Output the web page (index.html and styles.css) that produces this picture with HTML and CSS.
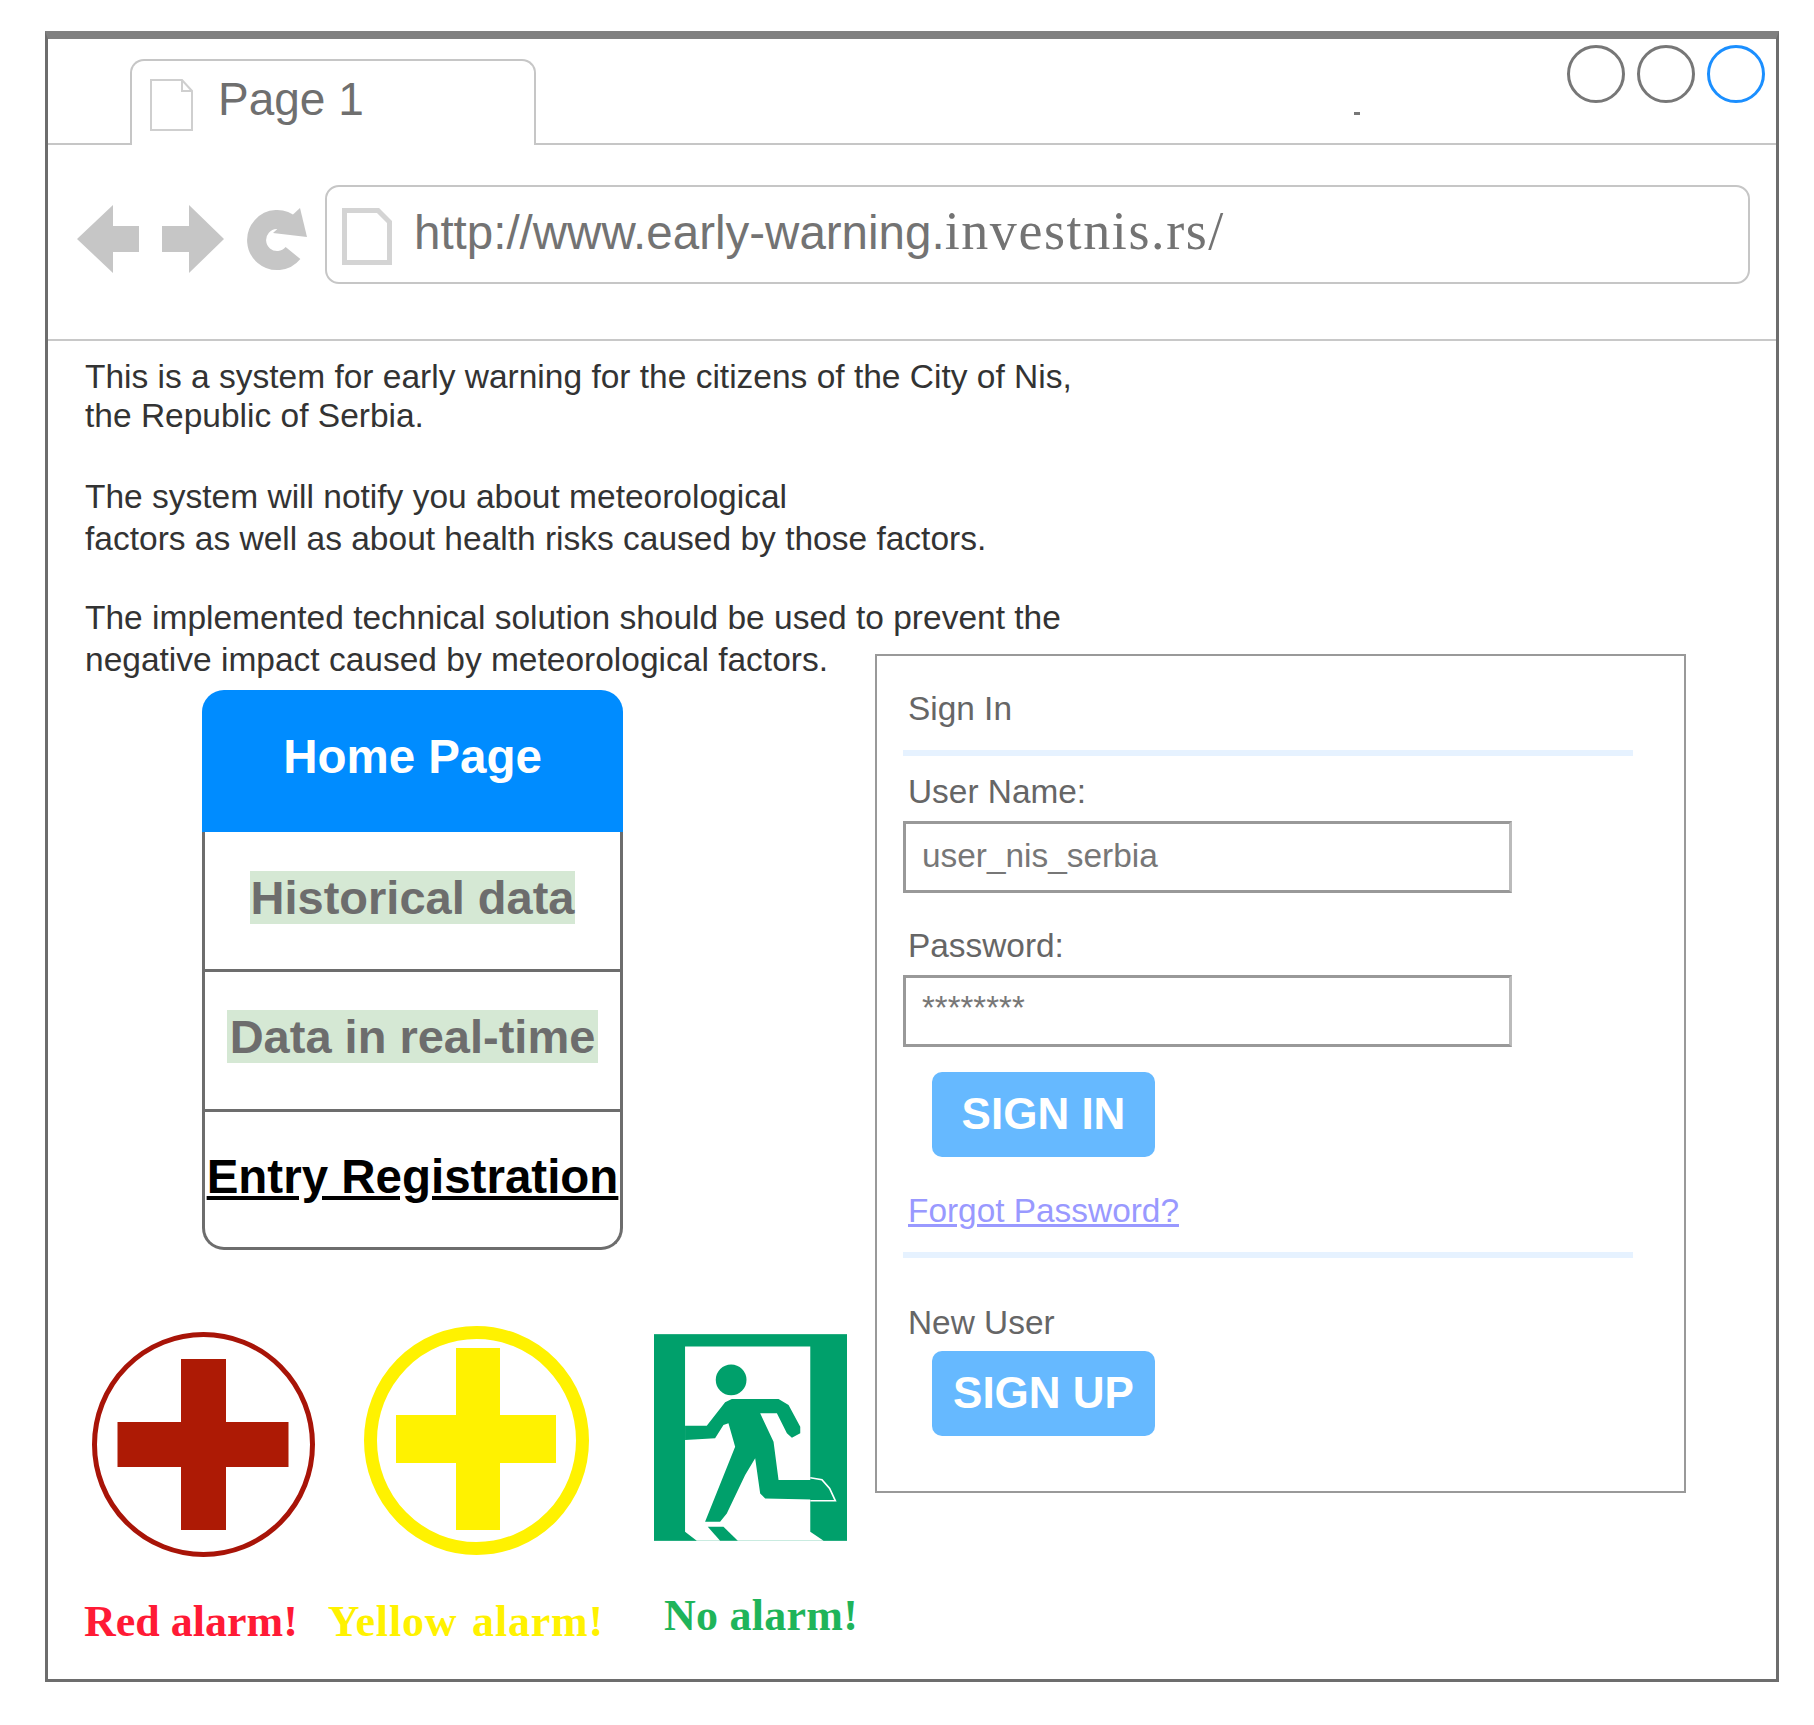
FILE: index.html
```html
<!DOCTYPE html>
<html>
<head>
<title>Early warning</title>
<link rel="stylesheet" href="styles.css">
</head>
<body>
<div class="window">
  <div class="tabbar">
    <div class="tab">
      <svg class="tab-doc" viewBox="0 0 43 52"><path d="M1 1H32L42 12V51H1Z M32 1V12H42" fill="none" stroke="#cfcfcf" stroke-width="2"/></svg>
      <span class="tab-title">Page 1</span>
    </div>
    <div class="dot"></div>
    <div class="win-btns">
      <div class="win-btn"></div>
      <div class="win-btn"></div>
      <div class="win-btn active"></div>
    </div>
  </div>

  <div class="urlbar">
    <svg class="nav-icons" viewBox="0 0 230 68">
      <path d="M0 34L36 0V21H62V47H36V68Z" fill="#c6c6c6"/>
      <path d="M85 21H112V0L147 34L112 68V47H85Z" fill="#c6c6c6"/>
      <path d="M214 20A20.500 20.500 0 1 0 216 48" fill="none" stroke="#c6c6c6" stroke-width="19"/>
      <path d="M223 3L230 32L196 28Z" fill="#c6c6c6"/>
    </svg>
    <div class="urlbox">
      <svg class="url-doc" viewBox="0 0 50 57"><path d="M2.5 2.5H36L47.5 14V54.500H2.500Z" fill="none" stroke="#d4d4d4" stroke-width="5"/></svg>
      <div class="url">http://www.early-warning.<span class="url-end">investnis.rs/</span></div>
    </div>
  </div>

  <div class="main">
    <div class="left">
      <div class="intro">
        <p class="p1">This is a system for early warning for the citizens of the City of Nis,<br>the Republic of Serbia.</p>
        <p class="p2">The system will notify you about meteorological<br>factors as well as about health risks caused by those factors.</p>
        <p class="p3">The implemented technical solution should be used to prevent the<br>negative impact caused by meteorological factors.</p>
      </div>

      <div class="menu">
        <div class="menu-head">Home Page</div>
        <div class="menu-list">
          <div class="menu-row"><span class="mark">Historical data</span></div>
          <div class="menu-row"><span class="mark">Data in real-time</span></div>
          <div class="menu-row last"><a class="entry" href="#">Entry Registration</a></div>
        </div>
      </div>

      <div class="signs">
        <svg class="sign-red" viewBox="0 0 223 225">
          <ellipse cx="111.500" cy="112.500" rx="109" ry="110" fill="none" stroke="#a81408" stroke-width="5"/>
          <path d="M89 27H134V90H196.500V135H134V198H89V135H25.500V90H89Z" fill="#ad1a05"/>
        </svg>
        <svg class="sign-yellow" viewBox="0 0 225 229">
          <ellipse cx="112.500" cy="114.500" rx="106" ry="108" fill="none" stroke="#fff200" stroke-width="13"/>
          <path d="M92 22H136V89H192V137H136V204H92V137H32V89H92Z" fill="#fff200"/>
        </svg>
        <svg class="sign-exit" viewBox="27 28 578 619">
          <rect x="27" y="28" width="578" height="619" fill="#00a06b"/>
          <path d="M120 65H495V620L535 647H155L120 620Z" fill="#fff"/>
          <circle cx="258" cy="165" r="46" fill="#00a06b"/>
          <path d="M120 302H185L240 232L260 222H400L430 240L465 305V325L440 338L425 325L395 265H345L385 350L400 465H505L530 480L570 525L360 520L345 505L330 400L300 450L245 565L225 590H180L270 365L250 295L235 300L210 340L120 345Z" fill="#00a06b"/>
          <path d="M188 605H235L278 647H225Z" fill="#00a06b"/>
          <path d="M495 458L530 464L553 490L570 527H495" fill="none" stroke="#fff" stroke-width="5"/>
        </svg>
      </div>
      <div class="labels">
        <span class="label red">Red alarm!</span>
        <span class="label yellow">Yellow alarm!</span>
        <span class="label green">No alarm!</span>
      </div>
    </div>

    <div class="panel">
      <div class="text">Sign In</div>
      <div class="rule first"></div>
      <div class="text user-label">User Name:</div>
      <div class="field">user_nis_serbia</div>
      <div class="text pass-label">Password:</div>
      <div class="field pass">********</div>
      <div class="btn signin">SIGN IN</div>
      <a class="text forgot" href="#">Forgot Password?</a>
      <div class="rule second"></div>
      <div class="text new-user">New User</div>
      <div class="btn signup">SIGN UP</div>
    </div>
  </div>
</div>
</body>
</html>
```

FILE: styles.css
```css
body{
margin:0;
padding:31px 0 0 45px;
background:#fff;
font-family:"Liberation Sans",Arial,sans-serif;}
.window{
width:1734px;
height:1651px;
box-sizing:border-box;
border:3px solid #6d6d6d;
border-top:8px solid #808080;}

.tabbar{
position:relative;
display:flex;
height:106px;
box-sizing:border-box;
border-bottom:2px solid #c6c6c6;}
.tab{
display:flex;
width:406px;
height:86px;
box-sizing:border-box;
margin:20px 0 -2px 82px;
padding:18px 0 0 18px;
border:2px solid #c6c6c6;
border-bottom:none;
border-radius:14px 14px 0 0;
background:#fff;
color:#6f6f6f;
font-size:46px;
line-height:40px;}
.tab-doc{width:43px;height:52px;margin-right:25px;}
.dot{
position:absolute;
left:1306px;
top:73px;
width:6px;
height:3px;
background:#777;}
.win-btns{
display:flex;
gap:12px;
margin:6px 11px 0 auto;}
.win-btn{
width:58px;
height:58px;
box-sizing:border-box;
border:3px solid #777;
border-radius:50%;}
.win-btn.active{border-color:#1b8fff;}

.urlbar{
display:flex;
height:196px;
box-sizing:border-box;
padding:40px 0 0 29px;
border-bottom:2px solid #c8c8c8;}
.nav-icons{width:230px;height:68px;margin:20px 18px 0 0;}
.urlbox{
display:flex;
width:1425px;
height:99px;
box-sizing:border-box;
padding:21px 0 0 15px;
border:2px solid #c6c6c6;
border-radius:14px;}
.url-doc{width:50px;height:57px;margin-right:22px;}
.url{
margin-top:-3px;
font-size:47.500px;
line-height:52px;
color:#737373;
white-space:nowrap;}
.url-end{
font-family:"Liberation Serif",serif;
font-size:54px;
letter-spacing:1.600px;}

.main{display:flex;}
.left{width:827px;flex:none;}

.intro{
padding:16px 0 0 37px;
font-size:33.500px;
color:#333;
white-space:nowrap;}
.intro p{margin:0;line-height:42px;}
.intro .p1{line-height:39px;}
.intro .p2{margin-top:41px;}
.intro .p3{margin-top:37px;}

.menu{
width:421px;
margin:9px 0 0 154px;
font-size:47px;
font-weight:bold;
text-align:center;}
.menu-head{
height:142px;
box-sizing:border-box;
padding-top:40px;
font-size:47.500px;
line-height:54px;
border-radius:22px 22px 0 0;
background:#008cff;
color:#fff;}
.menu-list{
height:418px;
box-sizing:border-box;
border:3px solid #6d6d6d;
border-top:none;
border-radius:0 0 22px 22px;}
.menu-row{
height:140px;
box-sizing:border-box;
padding-top:38px;
line-height:53px;
border-bottom:3px solid #6d6d6d;
color:#6d6d6d;}
.menu-row:first-child{padding-top:39px;}
.menu-row.last{border-bottom:none;}
.mark{
display:inline-block;
padding:0 3px;
background:#d5e8d4;}
.menu-row:first-child .mark{padding:0 1px;}
.entry{color:#000;font-size:47.500px;white-space:nowrap;}

.signs{
display:flex;
align-items:flex-start;
margin:76px 0 0 44px;}
.sign-red{width:223px;height:225px;margin-top:6px;}
.sign-yellow{width:225px;height:229px;margin-left:49px;}
.sign-exit{width:193px;height:207px;margin:8px 0 0 65px;}

.labels{
display:flex;
align-items:flex-start;
margin-top:40px;
padding-left:37px;
font-family:"Liberation Serif",serif;
font-size:44px;
font-weight:bold;
line-height:50px;
white-space:nowrap;}
.red{color:#ff1a35;margin-left:-1px;}
.yellow{color:#fff200;margin-left:30px;letter-spacing:.8px;word-spacing:3px;}
.green{color:#1fb45a;margin:-6px 0 0 60px;letter-spacing:.25px;}

.panel{
width:811px;
height:839px;
flex:none;
box-sizing:border-box;
margin-top:313px;
padding:34px 0 0 26px;
border:2px solid #999;}
.text{
display:block;
margin-left:5px;
font-size:33.400px;
line-height:38px;
color:#666;}
.rule{
width:730px;
height:6px;
background:#e6f2ff;}
.rule.first{margin-top:22px;}
.user-label{margin-top:17px;}
.field{
width:609px;
height:72px;
box-sizing:border-box;
margin-top:10px;
padding:13px 0 0 16px;
border:3px solid #999;
border-right-color:#bbb;
font-size:33.400px;
line-height:38px;
color:#777;}
.pass-label{margin-top:34px;}
.field.pass{
margin-top:10px;
padding-top:11px;
font-size:33px;}
.btn{
width:223px;
height:85px;
margin-left:29px;
border-radius:10px;
background:#66b9ff;
color:#fff;
font-size:44px;
font-weight:bold;
line-height:83px;
text-align:center;}
.signin{margin-top:25px;}
.forgot{margin-top:35px;color:#9999ff;}
.rule.second{margin-top:22px;}
.new-user{margin-top:46px;}
.signup{margin-top:9px;}
```
